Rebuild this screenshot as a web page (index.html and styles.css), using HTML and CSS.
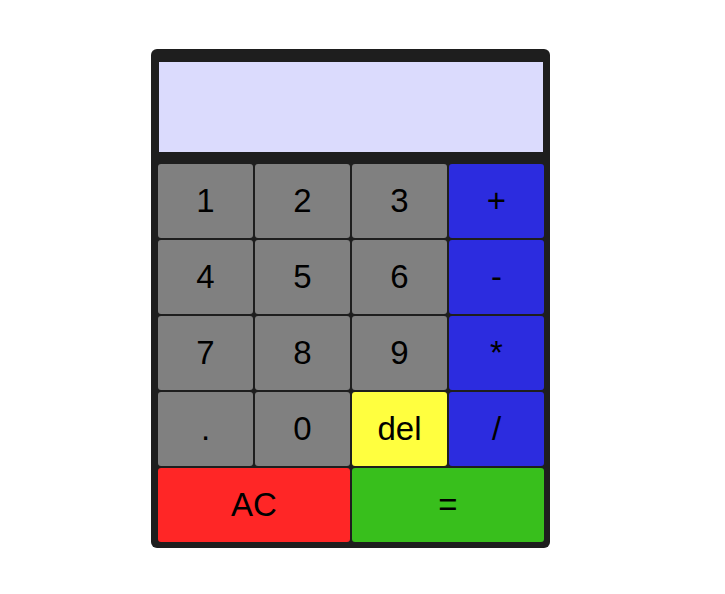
FILE: index.html
```html
<!DOCTYPE html>
<html lang="en">
<head>
  <meta charset="UTF-8">
  <meta name="viewport" content="width=device-width, initial-scale=1.0">
  <title>Calculator</title>
  <link rel="stylesheet" href="styles.css">
</head>
<body>
<div class="calc">
  <div class="display"></div>
  <div class="keys">
    <button class="key">1</button>
    <button class="key">2</button>
    <button class="key">3</button>
    <button class="key op">+</button>
    <button class="key">4</button>
    <button class="key">5</button>
    <button class="key">6</button>
    <button class="key op">-</button>
    <button class="key">7</button>
    <button class="key">8</button>
    <button class="key">9</button>
    <button class="key op">*</button>
    <button class="key">.</button>
    <button class="key">0</button>
    <button class="key del">del</button>
    <button class="key op">/</button>
    <button class="key clear wide">AC</button>
    <button class="key equals wide">=</button>
  </div>
</div>
</body>
</html>
```

FILE: styles.css
```css
body {
  margin: 0;
  padding: 49px 0 0 151px;
  background-color: #fff;
  font-family: "Liberation Sans", Arial, sans-serif;
}
.calc {
  width: 399px;
  height: 499px;
  box-sizing: border-box;
  background-color: #1e1e1e;
  border-radius: 6px;
  padding: 13px 6px 6px 7px;
}
.display {
  height: 90px;
  margin: 0 1px 12px 1px;
  background-color: #dbdbfd;
}
.keys {
  display: grid;
  grid-template-columns: repeat(4, 95px);
  grid-auto-rows: 74px;
  gap: 2px;
}
.key {
  border: none;
  border-radius: 3px;
  background-color: #808080;
  color: #000;
  font-family: "Liberation Sans", Arial, sans-serif;
  font-size: 33px;
  padding: 0;
  cursor: pointer;
}
.key.op {
  background-color: #2c2cdf;
}
.key.del {
  background-color: #ffff3f;
}
.key.wide {
  grid-column: span 2;
}
.key.clear {
  background-color: #ff2626;
}
.key.equals {
  background-color: #38bf1c;
}
```
